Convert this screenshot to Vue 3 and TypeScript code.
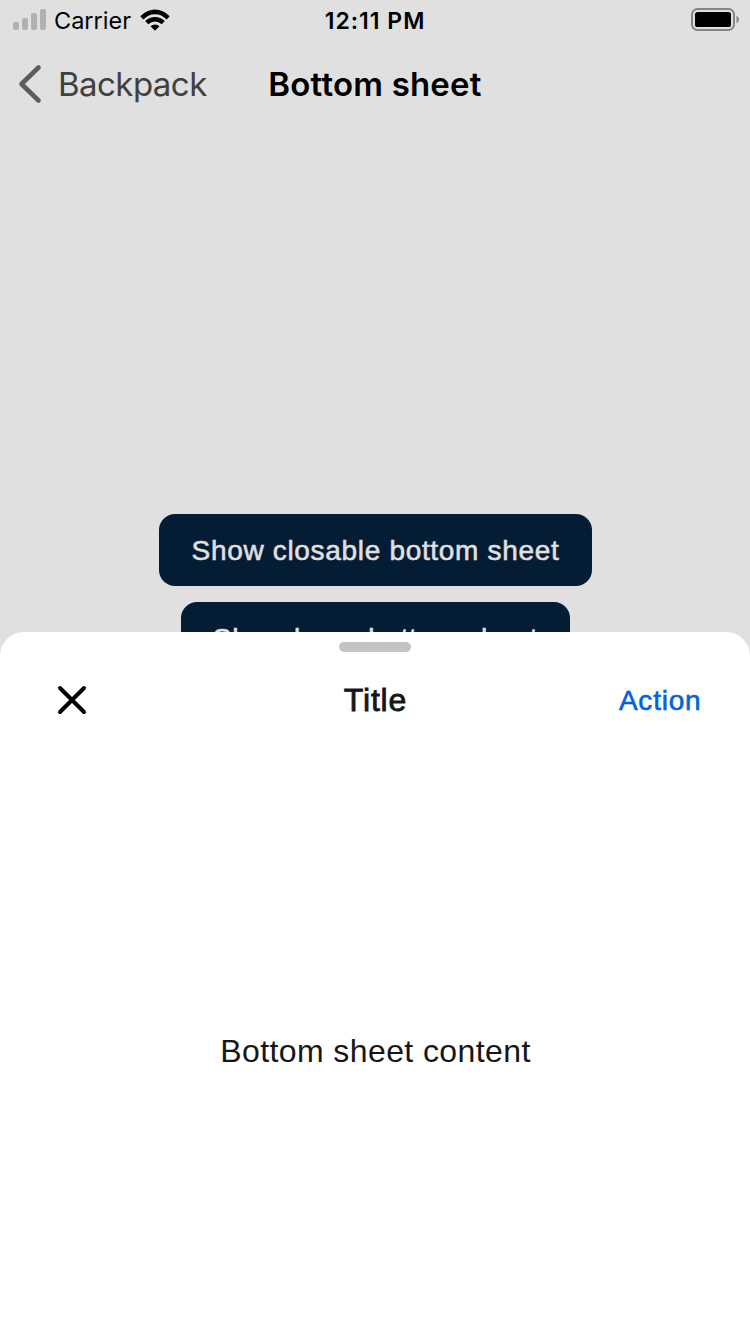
<script setup lang="ts">
const bars: number[] = [8, 12, 17, 21]
const buttons: { label: string; kind: string }[] = [
  { label: 'Show closable bottom sheet', kind: 'closable' },
  { label: 'Show large bottom sheet', kind: 'large' },
]
</script>

<template>
  <main class="screen">
    <header class="status">
      <div class="network">
        <div class="signal">
          <i v-for="h in bars" :key="h" :style="{ height: h + 'px' }"></i>
        </div>
        <span class="carrier">Carrier</span>
        <svg class="wifi" width="30" height="22" viewBox="0 0 30 22">
          <path d="M.3 7.2Q7 .5 15 .5T29.7 7.2L26.6 10.4Q21.5 5.2 15 5.2T3.4 10.4Z" />
          <path d="M5.2 12.1Q9.6 8 15 8T24.8 12.1L21.7 15.2Q18.8 12.5 15 12.5T8.3 15.2Z" />
          <path d="M10.5 17.2Q12.6 15.4 15 15.4T19.5 17.2L15 21.8Z" />
        </svg>
      </div>
      <time class="time">12:11 PM</time>
      <svg class="battery" width="48" height="24" viewBox="0 0 48 24">
        <rect x="2" y="2" width="42" height="21" rx="5.5" fill="none" stroke="#858585" stroke-width="2" />
        <rect x="5" y="5" width="36" height="15" rx="2.6" />
        <path d="M46.5 8.8Q49 10 49 12.5T46.5 16.2Z" fill="#858585" />
      </svg>
    </header>
    <nav class="nav">
      <a class="back">
        <svg width="26" height="40" viewBox="0 0 26 40">
          <path d="M21.5 3.5L4.5 20L21.5 36.5" fill="none" stroke="#5c5c5c" stroke-width="4.6" stroke-linecap="round" stroke-linejoin="round" />
        </svg>
        <span>Backpack</span>
      </a>
      <h1>Bottom sheet</h1>
      <span></span>
    </nav>
    <section class="actions">
      <button v-for="b in buttons" :key="b.kind" :class="b.kind"><span>{{ b.label }}</span></button>
    </section>
    <section class="sheet">
      <div class="handle"></div>
      <div class="bar">
        <svg width="30" height="30" viewBox="0 0 30 30">
          <path d="M3 3L27 27M27 3L3 27" stroke="#000" stroke-width="4" stroke-linecap="round" />
        </svg>
        <h2>Title</h2>
        <a><span>Action</span></a>
      </div>
      <p>Bottom sheet content</p>
    </section>
  </main>
</template>

<style>
body { margin: 0; }
</style>

<style scoped>
.screen {
  width: 750px;
  height: 1334px;
  position: relative;
  overflow: hidden;
  background: #e0e0e0;
  font-family: "Liberation Sans", Arial, sans-serif;
}
.status {
  height: 40px;
  display: grid;
  grid-template-columns: 1fr auto 1fr;
  align-items: center;
  font-family: Inter, sans-serif;
  font-size: 23.5px;
}
.network { display: flex; align-items: center; padding-left: 13px; }
.signal { display: flex; align-items: flex-end; gap: 3px; height: 21px; margin-top: -1px; }
.signal i { width: 6px; border-radius: 2px; background: #b1b1b1; }
.carrier { margin: 2px 0 0 8px; line-height: 38px; width: 79px; letter-spacing: 0; white-space: nowrap; }
.wifi { margin-left: 7px; flex: none; }
.time { margin-top: 2px; font-weight: 600; font-size: 23px; letter-spacing: 1px; line-height: 38px; }
.battery { justify-self: end; margin-right: 12px; margin-top: -2px; overflow: visible; }
.nav {
  height: 88px;
  display: grid;
  grid-template-columns: 1fr auto 1fr;
  align-items: center;
  font-family: Inter, sans-serif;
}
.back { display: flex; align-items: center; gap: 15px; padding-left: 17px; color: #404040; font-size: 33px; }
.back span { letter-spacing: -0.55px; }
h1 { margin: 0; font-size: 33px; font-weight: 600; letter-spacing: 0.2px; }
.actions { margin-top: 386px; display: flex; flex-direction: column; align-items: center; gap: 16px; }
button {
  border: 0;
  padding: 2px 0 0;
  height: 72px;
  border-radius: 16px;
  background: #051c35;
  color: #e0e0e0;
  font: 28px "Liberation Sans", Arial, sans-serif;
  letter-spacing: 0.68px;
  -webkit-text-stroke: 0.55px currentColor;
  white-space: nowrap;
}
.closable { width: 433px; margin-left: 1px; }
.large { width: 389px; margin-left: 1px; }
.sheet {
  position: absolute;
  inset: 632px 0 0;
  border-radius: 24px 24px 0 0;
  background: #fff;
  display: flex;
  flex-direction: column;
  align-items: center;
  color: #161616;
}
.handle { width: 72px; height: 10px; border-radius: 5px; background: #c4c4c6; margin-top: 10px; flex: none; }
.bar {
  width: 645px;
  height: 96px;
  display: grid;
  grid-template-columns: 1fr auto 1fr;
  align-items: center;
  margin-left: 8px;
}
h2 { margin: 0 7px 0 0; font-size: 32px; font-weight: 400; letter-spacing: 0.8px; -webkit-text-stroke: 0.8px currentColor; }
.bar a { justify-self: end; margin: 2px 0 0; color: #0062e3; font-size: 28px; letter-spacing: 0.8px; -webkit-text-stroke: 0.6px currentColor; }
p { margin: 284px 0 0 1px; font-size: 32px; line-height: 38px; letter-spacing: 0.4px; }
</style>
